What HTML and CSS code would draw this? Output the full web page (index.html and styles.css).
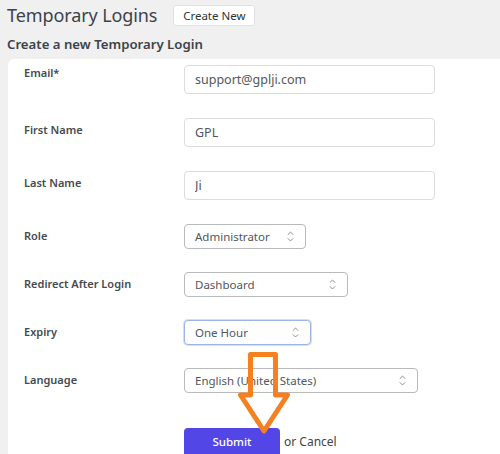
FILE: index.html
```html
<!DOCTYPE html>
<html>
<head>
<meta charset="utf-8">
<link rel="stylesheet" href="styles.css">
</head>
<body>
<div class="page">
  <div class="header">
    <h1 class="title">Temporary Logins</h1>
    <button class="btn-create">Create New</button>
  </div>
  <h2 class="subtitle">Create a new Temporary Login</h2>
  <div class="card">
    <div class="row row-text">
      <label class="label label-first">Email*</label>
      <input class="input" type="text" value="support@gplji.com">
    </div>
    <div class="row row-text">
      <label class="label">First Name</label>
      <input class="input" type="text" value="GPL">
    </div>
    <div class="row row-text">
      <label class="label">Last Name</label>
      <input class="input" type="text" value="Ji">
    </div>
    <div class="row row-sel">
      <label class="label">Role</label>
      <div class="select w-role"><span>Administrator</span><svg class="chev" viewBox="0 0 10 14"><path d="M2 5 L5 2 L8 5 M2 9 L5 12 L8 9"/></svg></div>
    </div>
    <div class="row row-sel">
      <label class="label">Redirect After Login</label>
      <div class="select w-redirect"><span>Dashboard</span><svg class="chev" viewBox="0 0 10 14"><path d="M2 5 L5 2 L8 5 M2 9 L5 12 L8 9"/></svg></div>
    </div>
    <div class="row row-sel">
      <label class="label">Expiry</label>
      <div class="select w-expiry focus"><span>One Hour</span><svg class="chev" viewBox="0 0 10 14"><path d="M2 5 L5 2 L8 5 M2 9 L5 12 L8 9"/></svg></div>
    </div>
    <div class="row row-lang">
      <label class="label">Language</label>
      <div class="select w-lang"><span>English (United States)</span><svg class="chev" viewBox="0 0 10 14"><path d="M2 5 L5 2 L8 5 M2 9 L5 12 L8 9"/></svg></div>
    </div>
    <div class="row row-submit">
      <span class="label"></span>
      <div class="actions">
        <button class="btn-submit">Submit</button>
        <span class="cancel">or Cancel</span>
      </div>
    </div>
  </div>
  <svg class="arrow" width="500" height="454" viewBox="0 0 500 454">
    <path d="M250.5 354.5 L275.5 354.5 L275.5 395 L287.5 395 L264 431 L240.5 395 L250.5 395 Z"/>
  </svg>
</div>
</body>
</html>
```
FILE: styles.css
```css
html, body {
  margin: 0;
  padding: 0;
}
body {
  background: #f0f0f1;
  font-family: "Noto Sans", "Open Sans", sans-serif;
  color: #3c434a;
  width: 500px;
  height: 454px;
  overflow: hidden;
}
.page {
  position: relative;
  width: 500px;
  height: 454px;
  overflow: hidden;
}
.header {
  display: flex;
  align-items: center;
  gap: 16px;
  padding: 4px 0 0 7px;
  height: 22px;
}
.title {
  margin: 0;
  font-size: 18px;
  font-weight: 400;
  line-height: 22px;
  color: #3c434a;
  letter-spacing: -0.1px;
}
.btn-create {
  font-family: inherit;
  font-size: 11.5px;
  color: #2c3338;
  background: #fff;
  border: 1px solid #e2e2e4;
  border-radius: 3px;
  height: 21px;
  width: 82px;
  padding: 0;
  line-height: 19px;
}
.subtitle {
  margin: 0;
  padding: 10px 0 0 7px;
  font-size: 13.2px;
  font-weight: 600;
  line-height: 16px;
  color: #3c434a;
}
.card {
  margin: 7px 0 0 8px;
  width: 510px;
  height: 402px;
  overflow: hidden;
  background: #fff;
  border-radius: 6px;
  padding: 6px 0 0 16px;
  box-sizing: border-box;
}
.row {
  display: flex;
  align-items: flex-start;
}
.row-text { height: 53px; }
.row-sel { height: 48px; }
.row-lang { height: 60px; }
.label {
  width: 160px;
  flex: none;
  font-size: 11px;
  font-weight: 600;
  line-height: 15px;
  padding-top: 4px;
  color: #454b52;
}
.label-first { padding-top: 0; }
.input {
  box-sizing: border-box;
  width: 251px;
  height: 29px;
  border: 1px solid #dcdcde;
  border-radius: 4px;
  padding: 0 10px;
  font-family: inherit;
  font-size: 12.5px;
  color: #50575e;
  background: #fff;
  outline: none;
}
.select {
  box-sizing: border-box;
  height: 25px;
  border: 1px solid #b8babd;
  border-radius: 4px;
  padding: 0 10px 0 10px;
  display: flex;
  align-items: center;
  justify-content: space-between;
  font-size: 11.5px;
  color: #50575e;
  background: #fff;
}
.w-role { width: 122px; }
.w-redirect { width: 164px; }
.w-expiry { width: 127px; }
.w-lang { width: 234px; }
.focus {
  border-color: #9db5e6;
  box-shadow: 0 0 0 1px #d3dff6;
}
.chev {
  width: 9px;
  height: 13px;
  fill: none;
  stroke: #8c8f94;
  stroke-width: 1.1;
}
.actions {
  display: flex;
  align-items: center;
  gap: 4px;
}
.btn-submit {
  width: 96px;
  height: 30px;
  background: #5246e6;
  color: #fff;
  border: none;
  border-radius: 4px;
  font-family: inherit;
  font-size: 11.5px;
  font-weight: 500;
  padding: 0 0 3px;
}
.cancel {
  font-size: 12px;
  color: #3c434a;
  padding-bottom: 3px;
}
.arrow {
  position: absolute;
  left: 0;
  top: 0;
  pointer-events: none;
}
.arrow path {
  fill: none;
  stroke: #f5801f;
  stroke-width: 5;
  stroke-linejoin: round;
}
```
